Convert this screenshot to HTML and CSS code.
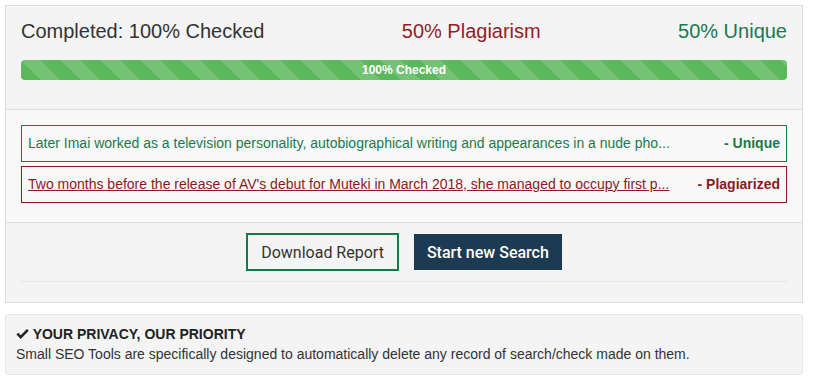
FILE: index.html
```html
<!DOCTYPE html>
<html lang="en">
<head>
  <meta charset="UTF-8" />
  <meta name="viewport" content="width=device-width, initial-scale=1.0"/>
  <title>Plagiarism Report</title>
  <link rel="stylesheet" href="styles.css">
</head>
<body>
  <div class="report">
    <div class="summary">
      <div class="stats">
        <span class="completed">Completed: 100% Checked</span>
        <span class="plag">50% Plagiarism</span>
        <span class="uniq">50% Unique</span>
      </div>
      <div class="progress">
        <div class="bar">100% Checked</div>
      </div>
    </div>

    <div class="results">
      <div class="row unique">
        <span class="sentence">Later Imai worked as a television personality, autobiographical writing and appearances in a nude pho...</span>
        <span class="tag">- Unique</span>
      </div>
      <div class="row plagiarized">
        <a class="sentence" href="#">Two months before the release of AV's debut for Muteki in March 2018, she managed to occupy first p...</a>
        <span class="tag">- Plagiarized</span>
      </div>
    </div>

    <div class="actions">
      <div class="buttons">
        <button class="btn btn-outline">Download Report</button>
        <button class="btn btn-dark">Start new Search</button>
      </div>
      <hr>
    </div>
  </div>

  <div class="well">
    <div class="well-title">
      <svg class="check" viewBox="0 0 16 16" width="13" height="13"><path d="M1.6 8.2 L5.8 12.4 L14.6 3.6" fill="none" stroke="#222" stroke-width="3.2"/></svg>
      YOUR PRIVACY, OUR PRIORITY
    </div>
    <p>Small SEO Tools are specifically designed to automatically delete any record of search/check made on them.</p>
  </div>
</body>
</html>
```

FILE: styles.css
```css
body {
  font-family: "Liberation Sans", Arial, sans-serif;
  background: #fff;
  margin: 0;
  padding: 5px 10px 5px 5px;
  color: #333;
}
.report {
  background: #f4f4f4;
  border: 1px solid #dedede;
}
.summary {
  padding: 14px 15px 29px;
  border-bottom: 1px solid #dedede;
}
.stats {
  display: flex;
  justify-content: space-between;
  font-size: 20px;
  line-height: 22px;
}
.completed { color: #333; }
.plag { color: #961b2d; }
.uniq { color: #1a7a4c; }
.progress {
  margin-top: 18px;
  height: 20px;
  border-radius: 4px;
  overflow: hidden;
  background: #f5f5f5;
}
.bar {
  height: 100%;
  background-color: #5cb85c;
  background-image: linear-gradient(45deg, rgba(255,255,255,.15) 25%, transparent 25%, transparent 50%, rgba(255,255,255,.15) 50%, rgba(255,255,255,.15) 75%, transparent 75%, transparent);
  background-size: 40px 40px;
  color: #fff;
  font-size: 12px;
  font-weight: bold;
  line-height: 20px;
  text-align: center;
}
.results {
  background: #f8f8f8;
  padding: 15px 15px 19px;
  border-bottom: 1px solid #dedede;
}
.row {
  display: flex;
  align-items: center;
  justify-content: space-between;
  padding: 7px 6px 8px;
  font-size: 14px;
  line-height: 20px;
  border: 1px solid;
}
.row + .row {
  margin-top: 4px;
}
.sentence {
  white-space: nowrap;
}
.tag {
  font-weight: bold;
}
.unique {
  border-color: #1a7a4c;
  color: #1a7a4c;
}
.plagiarized {
  border-color: #8b1a22;
  color: #8b1a22;
}
.plagiarized .sentence {
  color: #8b1a22;
  text-decoration: underline;
}
.actions {
  padding: 10px 15px 20px;
}
.buttons {
  display: flex;
  justify-content: center;
  gap: 15px;
}
.btn {
  font-family: Roboto, "Liberation Sans", sans-serif;
  font-size: 16px;
  height: 38px;
  padding: 0 13px;
  cursor: pointer;
}
.btn-outline {
  background: #f4f4f4;
  border: 2px solid #137a48;
  color: #333;
}
.btn-dark {
  background: #1c3a51;
  border: 1px solid #1c3a51;
  color: #fff;
  font-weight: 500;
  height: 36px;
  margin-top: 1px;
  padding: 0 12px;
}
hr {
  border: 0;
  border-top: 1px solid #e8e8e8;
  margin: 10px 0 0;
}
.well {
  margin-top: 11px;
  background: #f4f4f4;
  border: 1px solid #e6e6e6;
  border-radius: 4px;
  padding: 9px 10px 10px;
  font-size: 14px;
  line-height: 20px;
  color: #333;
}
.well-title {
  font-weight: bold;
  color: #222;
}
.check {
  vertical-align: -1px;
}
.well p {
  margin: 0;
}
```
